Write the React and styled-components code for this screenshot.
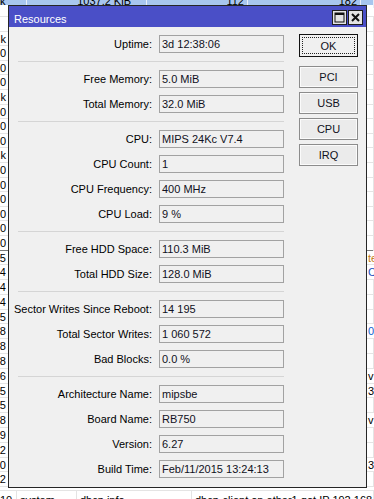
import React from 'react';
import styled, { createGlobalStyle } from 'styled-components';

const GlobalStyle = createGlobalStyle`
  html, body { margin: 0; padding: 0; }
  body {
    background: #ffffff;
    font-family: "Liberation Sans", Arial, sans-serif;
    font-size: 11px;
    overflow: hidden;
  }
`;

const Desktop = styled.div`
  position: relative;
  width: 374px;
  height: 499px;
  overflow: hidden;
  background: #ffffff;
`;

/* ---------- background list (behind the window) ---------- */
const BgList = styled.div`
  display: flex;
  flex-direction: column;
  margin-top: -9px;
`;

const TopRow = styled.div`
  display: grid;
  grid-template-columns: 27px 120px 101px 113px 1fr;
  height: 14px;
  background: #a8c6ee;
  font-size: 11px;
  line-height: 14px;
  color: #000;
`;

const TopCell = styled.span`
  border-right: 1px solid #e8eef8;
  padding: 3px ${p => p.$pad || 3}px 0 0;
  text-align: ${p => (p.$left ? 'left' : 'right')};
  white-space: nowrap;
  overflow: visible;
`;

const BgRow = styled.div`
  display: grid;
  grid-template-columns: 9px 140px 100px 100px 17px 1fr;
  height: ${p => p.$h}px;
  box-sizing: border-box;
  border-bottom: 1px solid ${p => (p.$dark ? '#7a7a7a' : '#e4e4e4')};
  font-size: 11px;
  line-height: ${p => p.$h}px;
  color: #000;
`;

const BgCell = styled.span`
  display: flex;
  justify-content: ${p => (p.$right ? 'flex-end' : 'flex-start')};
  white-space: nowrap;
  border-right: 1px solid #e4e4e4;
  padding: 0 2px;
  color: ${p => p.$color || '#000'};
  overflow: visible;
`;

const BottomRow = styled.div`
  display: grid;
  grid-template-columns: 17px 60px 115px 1fr;
  height: 15px;
  margin-top: 3px;
  font-size: 11px;
  line-height: 19px;
  color: #000;
  border-top: 1px solid #e4e4e4;
`;

const BottomCell = styled.span`
  border-right: 1px solid #e4e4e4;
  padding: 0 ${p => (p.$flush ? 0 : 3)}px;
  white-space: nowrap;
  overflow: hidden;
`;

/* ---------- window ---------- */
const Window = styled.section`
  position: absolute;
  left: 8px;
  top: 5px;
  width: 359px;
  height: 483px;
  box-sizing: border-box;
  border: 1px solid #262626;
  background: #f0f0f0;
  display: flex;
  flex-direction: column;
`;

const TitleBar = styled.header`
  height: 21px;
  flex: none;
  background: #4a4fc7;
  display: flex;
  align-items: flex-start;
  padding: 0 3px 0 5px;
`;

const Title = styled.h1`
  flex: 1;
  margin: 0;
  font-family: "Liberation Sans", Arial, sans-serif;
  font-weight: normal;
  font-size: 11px;
  line-height: 26px;
  height: 21px;
  color: #ffffff;
`;

const TitleButtons = styled.div`
  display: flex;
  gap: 1px;
  margin-top: 4px;
`;

const TitleButton = styled.button`
  width: 15px;
  height: 15px;
  padding: 0;
  margin: 0;
  box-sizing: border-box;
  border: 1px solid #1e1e1e;
  background: #e4e4e4;
  display: flex;
  align-items: center;
  justify-content: center;
`;

const Body = styled.div`
  flex: 1;
  display: flex;
  padding: 7px 8px 9px 9px;
  gap: 15px;
`;

const Form = styled.div`
  width: 266px;
  margin-top: 1px;
  display: flex;
  flex-direction: column;
`;

const Group = styled.div`
  display: flex;
  flex-direction: column;
  gap: 7px;
`;

const Separator = styled.hr`
  margin: 8px 0;
  border: 0;
  height: 1px;
  background: #d5d5d5;
`;

const Row = styled.div`
  display: grid;
  grid-template-columns: 134px 125px;
  column-gap: 7px;
  height: 18px;
  align-items: center;
`;

const Label = styled.label`
  display: flex;
  justify-content: flex-end;
  white-space: nowrap;
  font-size: 11px;
  color: #000;
`;

const ValueBox = styled.div`
  height: 18px;
  box-sizing: border-box;
  border: 1px solid #a2a2a2;
  background: #f0f0f0;
  padding: 0 2px;
  font-size: 11px;
  line-height: 16px;
  color: #111122;
  white-space: nowrap;
  overflow: hidden;
`;

const ButtonColumn = styled.div`
  width: 59px;
  display: flex;
  flex-direction: column;
  gap: 4px;
`;

const Button = styled.button`
  width: 59px;
  height: ${p => (p.$default ? 23 : 22)}px;
  margin: 0 0 ${p => (p.$default ? 5 : 0)}px;
  padding: 0;
  box-sizing: border-box;
  font-family: "Liberation Sans", Arial, sans-serif;
  font-size: 11px;
  color: #111122;
  background: ${p => (p.$default ? '#f0f0f0' : '#ebebeb')};
  border: 1px solid ${p => (p.$default ? '#111' : '#8c8c8c')};
  box-shadow: ${p => (p.$default ? 'none' : 'inset 0 0 0 1px #fbfbfb')};
  outline: ${p => (p.$default ? '1px dotted #222' : 'none')};
  outline-offset: -4px;
`;

const groups = [
  [['Uptime', '3d 12:38:06']],
  [['Free Memory', '5.0 MiB'], ['Total Memory', '32.0 MiB']],
  [['CPU', 'MIPS 24Kc V7.4'], ['CPU Count', '1'], ['CPU Frequency', '400 MHz'], ['CPU Load', '9 %']],
  [['Free HDD Space', '110.3 MiB'], ['Total HDD Size', '128.0 MiB']],
  [['Sector Writes Since Reboot', '14 195'], ['Total Sector Writes', '1 060 572'], ['Bad Blocks', '0.0 %']],
  [['Architecture Name', 'mipsbe'], ['Board Name', 'RB750'], ['Version', '6.27'], ['Build Time', 'Feb/11/2015 13:24:13']],
];

const upperRows = ['', 'k', '0', '0', '0', 'k', '0', '0', '0', 'k', '0', '0', '0', '0', '0', '0'];
const lowerRows = [
  ['65', 'te', '#c07a10'], ['24', 'C', '#2050c0'], ['24', ''], ['24', ''], ['25', ''], ['28', '0', '#1060d0'],
  ['28', ''], ['28', ''], ['26', 'v'], ['45', '3'], ['55', ''], ['58', 'v'], ['29', ''], ['32', ''],
  ['40', '3'], ['42', ''],
];

function MaxIcon() {
  return (
    <svg width="11" height="11" viewBox="0 0 11 11">
      <rect x="1" y="1" width="9" height="9" fill="none" stroke="#111" strokeWidth="1" />
      <rect x="1" y="1" width="9" height="2" fill="#111" />
    </svg>
  );
}

function CloseIcon() {
  return (
    <svg width="11" height="11" viewBox="0 0 11 11">
      <path d="M2 2 L9 9 M9 2 L2 9" stroke="#111" strokeWidth="2" />
    </svg>
  );
}

export default function App() {
  return (
    <Desktop>
      <GlobalStyle />
      <BgList>
        <TopRow>
          <TopCell $left>k</TopCell>
          <TopCell $pad={15}>1037.2 KiB</TopCell>
          <TopCell>112</TopCell>
          <TopCell>182</TopCell>
          <TopCell />
        </TopRow>
        <BgRow $h={12} />
        {upperRows.map((t, i) => (
          <BgRow key={'u' + i} $h={14.6} $dark={i === upperRows.length - 1}>
            <BgCell $right>{t}</BgCell>
            <BgCell />
            <BgCell />
            <BgCell />
            <BgCell />
            <BgCell />
          </BgRow>
        ))}
        {lowerRows.map(([l, r, c], i) => (
          <BgRow key={'l' + i} $h={14.8}>
            <BgCell $right>{l}</BgCell>
            <BgCell />
            <BgCell />
            <BgCell />
            <BgCell />
            <BgCell $color={c}>{r}</BgCell>
          </BgRow>
        ))}
        <BottomRow>
          <BottomCell $flush>10</BottomCell>
          <BottomCell>system</BottomCell>
          <BottomCell>dhcp,info</BottomCell>
          <BottomCell>dhcp-client on ether1 got IP 192.168.88.10 from</BottomCell>
        </BottomRow>
      </BgList>

      <Window>
        <TitleBar>
          <Title>Resources</Title>
          <TitleButtons>
            <TitleButton aria-label="Maximize"><MaxIcon /></TitleButton>
            <TitleButton aria-label="Close"><CloseIcon /></TitleButton>
          </TitleButtons>
        </TitleBar>
        <Body>
          <Form>
            {groups.map((g, gi) => (
              <React.Fragment key={gi}>
                {gi > 0 && <Separator />}
                <Group>
                  {g.map(([label, value]) => (
                    <Row key={label}>
                      <Label>{label}:</Label>
                      <ValueBox>{value}</ValueBox>
                    </Row>
                  ))}
                </Group>
              </React.Fragment>
            ))}
          </Form>
          <ButtonColumn>
            <Button $default>OK</Button>
            <Button>PCI</Button>
            <Button>USB</Button>
            <Button>CPU</Button>
            <Button>IRQ</Button>
          </ButtonColumn>
        </Body>
      </Window>
    </Desktop>
  );
}
